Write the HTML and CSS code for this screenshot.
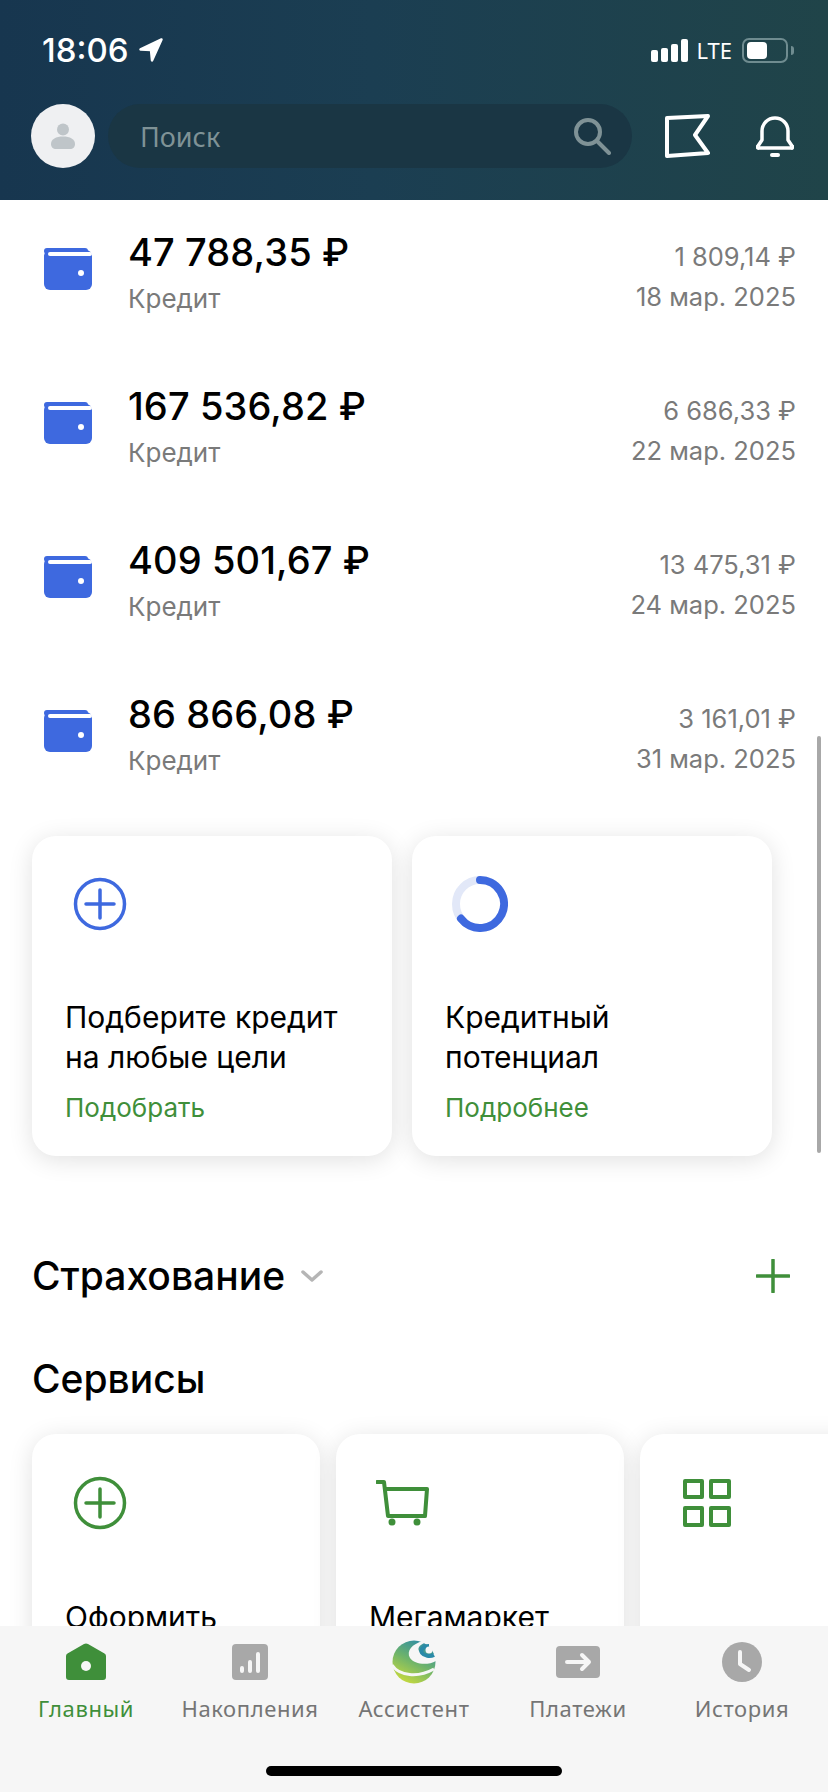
FILE: index.html
```html
<!DOCTYPE html>
<html lang="ru">
<head>
    <meta charset="UTF-8">
    <meta name="viewport" content="width=device-width, initial-scale=1.0">
    <title>Главный</title>
    <link rel="stylesheet" href="styles.css">
</head>
<body>
    <div class="screen">
        <!-- Header -->
        <header class="header">
            <div class="status-bar">
                <div class="status-time">
                    <span>18:06</span>
                    <svg width="26" height="26" viewBox="0 0 26 26"><path d="M23.500 2.500 2.500 12.500l10.500.5 1 10.500z" fill="#fff" stroke="#fff" stroke-width="2.500" stroke-linejoin="round"/></svg>
                </div>
                <div class="status-right">
                    <div class="signal"><i></i><i></i><i></i><i></i></div>
                    <span class="lte">LTE</span>
                    <div class="battery"><div class="battery-fill"></div></div>
                    <div class="battery-cap"></div>
                </div>
            </div>
            <div class="top-bar">
                <div class="avatar">
                    <svg width="24" height="26" viewBox="0 0 24 26"><circle cx="12" cy="6.500" r="6" fill="#bfc5c9"/><path d="M0 21c0-5 5-7.500 12-7.500S24 16 24 21c0 3-2 5-5 5H5c-3 0-5-2-5-5z" fill="#bfc5c9"/></svg>
                </div>
                <div class="search">
                    <span>Поиск</span>
                    <svg width="38" height="38" viewBox="0 0 38 38" fill="none" stroke="#7f9296"><circle cx="15" cy="15" r="12" stroke-width="4"/><path d="m24 24 12 12" stroke-width="4" stroke-linecap="round"/></svg>
                </div>
                <svg class="top-icon flag" width="46" height="44" viewBox="0 0 46 44" fill="none" stroke="#fff" stroke-width="4" stroke-linejoin="round"><path d="M3 4 44 2 31 21 44 39 3 42z"/></svg>
                <svg class="top-icon" width="38" height="44" viewBox="0 0 38 44" fill="none" stroke="#fff" stroke-width="3.500" stroke-linejoin="round"><path d="M6 26V17a13 13 0 0 1 26 0v9l4 6a1 1 0 0 1-1 2H3a1 1 0 0 1-1-2z"/><path d="M16 41h6" stroke-linecap="round" stroke-width="4"/></svg>
            </div>
        </header>

        <!-- Credits -->
        <section class="credits">
            <div class="credit">
                <svg class="wallet" width="48" height="42" viewBox="0 0 48 42"><rect width="44" height="6" rx="3" fill="#3e69df"/><rect y="2" width="48" height="40" rx="6" fill="#3e69df"/><rect x="4" y="4" width="44" height="4" rx="2" fill="#fff"/><circle cx="37" cy="25" r="3" fill="#fff"/></svg>
                <div class="credit-main">
                    <div class="credit-sum">47 788,35 ₽</div>
                    <div class="credit-type">Кредит</div>
                </div>
                <div class="credit-side">
                    <div>1 809,14 ₽</div>
                    <div>18 мар. 2025</div>
                </div>
            </div>
            <div class="credit">
                <svg class="wallet" width="48" height="42" viewBox="0 0 48 42"><rect width="44" height="6" rx="3" fill="#3e69df"/><rect y="2" width="48" height="40" rx="6" fill="#3e69df"/><rect x="4" y="4" width="44" height="4" rx="2" fill="#fff"/><circle cx="37" cy="25" r="3" fill="#fff"/></svg>
                <div class="credit-main">
                    <div class="credit-sum">167 536,82 ₽</div>
                    <div class="credit-type">Кредит</div>
                </div>
                <div class="credit-side">
                    <div>6 686,33 ₽</div>
                    <div>22 мар. 2025</div>
                </div>
            </div>
            <div class="credit">
                <svg class="wallet" width="48" height="42" viewBox="0 0 48 42"><rect width="44" height="6" rx="3" fill="#3e69df"/><rect y="2" width="48" height="40" rx="6" fill="#3e69df"/><rect x="4" y="4" width="44" height="4" rx="2" fill="#fff"/><circle cx="37" cy="25" r="3" fill="#fff"/></svg>
                <div class="credit-main">
                    <div class="credit-sum">409 501,67 ₽</div>
                    <div class="credit-type">Кредит</div>
                </div>
                <div class="credit-side">
                    <div>13 475,31 ₽</div>
                    <div>24 мар. 2025</div>
                </div>
            </div>
            <div class="credit">
                <svg class="wallet" width="48" height="42" viewBox="0 0 48 42"><rect width="44" height="6" rx="3" fill="#3e69df"/><rect y="2" width="48" height="40" rx="6" fill="#3e69df"/><rect x="4" y="4" width="44" height="4" rx="2" fill="#fff"/><circle cx="37" cy="25" r="3" fill="#fff"/></svg>
                <div class="credit-main">
                    <div class="credit-sum">86 866,08 ₽</div>
                    <div class="credit-type">Кредит</div>
                </div>
                <div class="credit-side">
                    <div>3 161,01 ₽</div>
                    <div>31 мар. 2025</div>
                </div>
            </div>
        </section>

        <!-- Offer cards -->
        <section class="offers">
            <div class="card offer">
                <svg class="offer-icon" width="56" height="56" viewBox="0 0 56 56" fill="none" stroke="#3e69df"><circle cx="28" cy="28" r="24.500" stroke-width="3.500"/><path d="M14 28h28M28 14v28" stroke-width="3.500" stroke-linecap="round"/></svg>
                <div class="offer-title">Подберите кредит<br>на любые цели</div>
                <div class="offer-link">Подобрать</div>
            </div>
            <div class="card offer">
                <svg class="offer-icon" width="56" height="56" viewBox="0 0 56 56" fill="none" stroke-width="8"><circle cx="28" cy="28" r="24" stroke="#e2e8f8"/><path d="M28 4a24 24 0 1 1-19 38.600" stroke="#3e69df" stroke-linecap="round"/></svg>
                <div class="offer-title">Кредитный<br>потенциал</div>
                <div class="offer-link">Подробнее</div>
            </div>
        </section>

        <!-- Sections -->
        <div class="section-head">
            <div class="section-title">Страхование</div>
            <svg class="chevron" width="22" height="12" viewBox="0 0 22 12" fill="none" stroke="#b5b5b5" stroke-width="3.500" stroke-linecap="round" stroke-linejoin="round"><path d="m2 2 9 8 9-8"/></svg>
            <svg class="section-add" width="34" height="34" viewBox="0 0 34 34" stroke="#3f8f3a" stroke-width="3.500" stroke-linecap="round"><path d="M1 17h32M17 1v32"/></svg>
        </div>
        <div class="section-title services-title">Сервисы</div>

        <section class="services">
            <div class="card service">
                <svg class="service-icon" width="56" height="56" viewBox="0 0 56 56" fill="none" stroke="#3f8f3a"><circle cx="28" cy="28" r="24.500" stroke-width="3.500"/><path d="M14 28h28M28 14v28" stroke-width="3.500" stroke-linecap="round"/></svg>
                <div class="service-title">Оформить</div>
            </div>
            <div class="card service">
                <svg class="service-icon" width="56" height="56" viewBox="0 0 56 56" fill="none" stroke="#3f8f3a" stroke-width="4" stroke-linecap="round" stroke-linejoin="round"><path d="M1 7h7l4 34h37l2-27H9.500"/><circle cx="16" cy="47" r="2" fill="#3f8f3a" stroke-width="3"/><circle cx="41" cy="47" r="2" fill="#3f8f3a" stroke-width="3"/></svg>
                <div class="service-title">Мегамаркет</div>
            </div>
            <div class="card service">
                <svg class="service-icon" width="56" height="56" viewBox="0 0 56 56" fill="none" stroke="#3f8f3a" stroke-width="4" stroke-linejoin="round"><rect x="5" y="6" width="17" height="16"/><rect x="31" y="6" width="18" height="16"/><rect x="5" y="33" width="17" height="17"/><rect x="31" y="33" width="18" height="17"/></svg>
            </div>
        </section>

        <!-- Scroll indicator -->
        <div class="scroll-thumb"></div>

        <!-- Tab bar -->
        <nav class="tab-bar">
            <div class="tabs">
                <div class="tab tab-active">
                    <div class="tab-icon">
                        <svg width="40" height="38" viewBox="0 0 40 38"><path d="M1.500 10.500 18 1a4 4 0 0 1 4 0l16.500 9.500A3 3 0 0 1 40 13v21a3 3 0 0 1-3 3H3a3 3 0 0 1-3-3V13a3 3 0 0 1 1.500-2.500z" fill="#3f8f3a"/><circle cx="20" cy="23" r="5" fill="#f6f6f6"/></svg>
                    </div>
                    <span>Главный</span>
                </div>
                <div class="tab">
                    <div class="tab-icon">
                        <svg width="36" height="36" viewBox="0 0 36 36"><rect width="36" height="36" rx="4" fill="#a8a8a8"/><g stroke="#f6f6f6" stroke-width="4" stroke-linecap="round"><path d="M10 24v3M18 18v9M26 10v17"/></g></svg>
                    </div>
                    <span>Накопления</span>
                </div>
                <div class="tab">
                    <div class="tab-icon">
                        <svg width="44" height="44" viewBox="0 0 44 44"><defs><linearGradient id="logo" x1="0.750" y1="0" x2="0.250" y2="1"><stop offset="0" stop-color="#2a8aa8"/><stop offset="0.500" stop-color="#6fb46a"/><stop offset="1" stop-color="#cbdc3c"/></linearGradient></defs><circle cx="22" cy="22" r="21.500" fill="url(#logo)"/><path d="M31 1C20 4 14 11 18 18c4 6 17 8 26 3v-8C37 16 29 15 27 11c-2-4 2-7 8-9z" fill="#f6f6f6"/><path d="M37 6c-6 0-9 4-7 7s8 4 12 2" fill="none" stroke="#2a8aa8" stroke-width="4"/><circle cx="37" cy="10" r="3.500" fill="#f6f6f6"/><path d="M44 0h-8c4 1 6 3 8 6zM44 28c-3 10-10 16-18 16h18z" fill="#f6f6f6"/><path d="M0 25c7 11 26 13 42 4" fill="none" stroke="#f6f6f6" stroke-width="3"/></svg>
                    </div>
                    <span>Ассистент</span>
                </div>
                <div class="tab">
                    <div class="tab-icon">
                        <svg width="44" height="32" viewBox="0 0 44 32"><rect width="44" height="32" rx="4" fill="#a8a8a8"/><g fill="none" stroke="#f6f6f6" stroke-width="4" stroke-linecap="round" stroke-linejoin="round"><path d="M11 16h22M26 9l7 7-7 7"/></g></svg>
                    </div>
                    <span>Платежи</span>
                </div>
                <div class="tab">
                    <div class="tab-icon">
                        <svg width="40" height="40" viewBox="0 0 40 40"><circle cx="20" cy="20" r="20" fill="#a8a8a8"/><path d="M18 10v12l9 6" fill="none" stroke="#f6f6f6" stroke-width="4" stroke-linecap="round" stroke-linejoin="round"/></svg>
                    </div>
                    <span>История</span>
                </div>
            </div>
            <div class="home-indicator"></div>
        </nav>
    </div>
</body>
</html>
```

FILE: styles.css
```css
* {
    margin: 0;
    padding: 0;
    box-sizing: border-box;
}

body {
    font-family: Inter, "Noto Sans", sans-serif;
    background: #fff;
    color: #000;
}

.screen {
    position: relative;
    width: 828px;
    height: 1792px;
    overflow: hidden;
}

/* Header */
.header {
    height: 200px;
    padding: 0 34px 0 31px;
    background: linear-gradient(90deg, #17364f 0%, #1b3e52 45%, #204449 100%);
}

.status-bar {
    height: 100px;
    padding-top: 27px;
    display: flex;
    justify-content: space-between;
    align-items: flex-start;
    color: #fff;
}

.status-time {
    display: flex;
    align-items: center;
    gap: 9px;
    margin-left: 11px;
    font-size: 33px;
    line-height: 46px;
    font-weight: 500;
}

.status-right {
    display: flex;
    align-items: center;
    height: 46px;
}

.signal {
    display: flex;
    align-items: flex-end;
    gap: 3px;
    height: 24px;
}

.signal i {
    width: 7px;
    border-radius: 2px;
    background: #fff;
}

.signal i:nth-child(1) { height: 12px; }
.signal i:nth-child(2) { height: 14px; }
.signal i:nth-child(3) { height: 18px; }
.signal i:nth-child(4) { height: 23px; }

.lte {
    margin-left: 8px;
    font-family: "Noto Sans", sans-serif;
    font-size: 22px;
    line-height: 24px;
}

.battery {
    width: 46px;
    height: 25px;
    margin-left: 10px;
    padding: 2px 3px;
    border: 2px solid #6f8c90;
    border-radius: 7px;
}

.battery-fill {
    width: 20px;
    height: 100%;
    background: #fff;
    border-radius: 4px;
}

.battery-cap {
    width: 3px;
    height: 9px;
    margin-left: 3px;
    border-radius: 0 3px 3px 0;
    background: #6f8c90;
}

.top-bar {
    display: flex;
    align-items: center;
    height: 64px;
    margin-top: 4px;
}

.avatar {
    flex: none;
    width: 64px;
    height: 64px;
    display: flex;
    align-items: center;
    justify-content: center;
    border-radius: 50%;
    background: #eff0f2;
}

.search {
    flex: none;
    width: 524px;
    height: 64px;
    margin-left: 13px;
    padding: 0 21px 0 32px;
    display: flex;
    align-items: center;
    justify-content: space-between;
    border-radius: 32px;
    background: #1a3644;
    color: #7f9296;
    font-family: "Noto Sans", sans-serif;
    font-size: 27px;
}

.flag {
    margin-left: 32px;
}

.top-icon {
    flex: none;
}

.top-icon:last-child {
    margin-left: 46px;
}

/* Credits */
.credits {
    padding-top: 26px;
}

.credit {
    display: flex;
    align-items: flex-start;
    height: 154px;
    padding: 0 32px 0 44px;
}

.wallet {
    flex: none;
    margin-top: 22px;
}

.credit-main {
    flex: 1;
    margin-left: 36px;
    padding-top: 2px;
}

.credit-sum {
    font-size: 38px;
    line-height: 48px;
    font-weight: 500;
    letter-spacing: 0.1px;
}

.credit-type {
    margin-top: 5px;
    font-size: 26px;
    line-height: 36px;
    color: #7a7a7a;
}

.credit-side {
    text-align: right;
    padding-top: 11px;
    font-size: 25.5px;
    line-height: 40px;
    color: #7a7a7a;
}

/* Cards */
.card {
    flex: none;
    background: #fff;
    border-radius: 24px;
    box-shadow: 0 4px 24px rgba(0, 0, 0, 0.12);
}

.offers {
    display: flex;
    gap: 20px;
    margin-top: -6px;
    padding-left: 32px;
}

.offer {
    width: 360px;
    height: 320px;
    padding: 40px 32px 0 33px;
}

.offer-icon {
    display: block;
    margin-left: 7px;
}

.offer-title {
    margin-top: 65px;
    font-size: 30px;
    line-height: 40px;
}

.offer-link {
    margin-top: 13px;
    font-size: 26px;
    line-height: 36px;
    color: #3f8f3a;
}

.section-head {
    display: flex;
    align-items: center;
    margin-top: 96px;
    padding: 0 38px 0 32px;
}

.section-title {
    font-size: 39px;
    line-height: 48px;
    font-weight: 500;
}

.chevron {
    margin-left: 16px;
}

.section-add {
    margin-left: auto;
}

.services-title {
    margin-top: 55px;
    padding-left: 32px;
}

.services {
    display: flex;
    gap: 16px;
    margin-top: 31px;
    padding-left: 32px;
}

.service {
    width: 288px;
    height: 320px;
    padding: 41px 32px 0 33px;
}

.service-icon {
    display: block;
    margin-left: 7px;
}

.service-title {
    margin-top: 66px;
    font-size: 30px;
    line-height: 40px;
}

/* Over the content */
.scroll-thumb {
    position: absolute;
    top: 736px;
    right: 7px;
    width: 4px;
    height: 417px;
    border-radius: 2px;
    background: #a8a8a8;
}

.tab-bar {
    position: absolute;
    left: 0;
    right: 0;
    bottom: 0;
    height: 166px;
    padding: 13px 4px 0;
    background: #f6f6f6;
}

.tabs {
    display: grid;
    grid-template-columns: repeat(5, 164px);
    height: 97px;
}

.tab {
    display: flex;
    flex-direction: column;
    align-items: center;
    gap: 7px;
    font-family: "Noto Sans", sans-serif;
    font-size: 22px;
    line-height: 32px;
    letter-spacing: 0.6px;
    color: #757575;
}

.tab-icon {
    height: 46px;
    display: flex;
    align-items: center;
    justify-content: center;
}

.tab-active {
    color: #3f8f3a;
}

.home-indicator {
    width: 296px;
    height: 10px;
    margin: 30px auto 0;
    border-radius: 5px;
    background: #000;
}
```
